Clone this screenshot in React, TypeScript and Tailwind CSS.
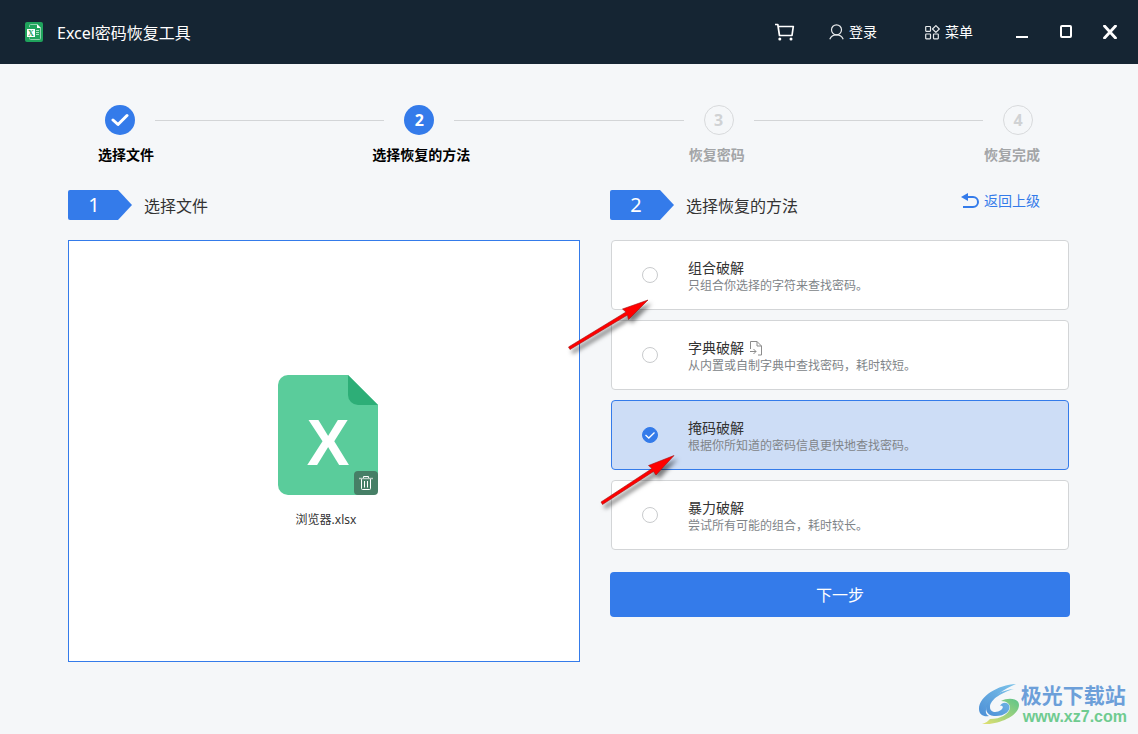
import { ReactNode, useState } from "react";
import clsx from "clsx";

const methods = [
  { id: "combo", title: "组合破解", text: "只组合你选择的字符来查找密码。" },
  {
    id: "dictionary",
    title: "字典破解",
    text: "从内置或自制字典中查找密码，耗时较短。",
    hasImport: true,
  },
  { id: "mask", title: "掩码破解", text: "根据你所知道的密码信息更快地查找密码。" },
  { id: "brute", title: "暴力破解", text: "尝试所有可能的组合，耗时较长。" },
];

const steps = ["选择文件", "选择恢复的方法", "恢复密码", "恢复完成"];
const currentStep = 2;

const AppLogo = () => (
  <svg width="18" height="20" viewBox="0 0 18 20" aria-hidden="true">
    <rect width="18" height="20" rx="2" fill="#1fa35c" />
    <path
      d="M4.500 5V3.500a1 1 0 0 1 1-1H12M15.500 6v10.500a1 1 0 0 1-1 1H5.500a1 1 0 0 1-1-1V15.500"
      fill="none"
      stroke="#8fd4ae"
    />
    <path d="M12 2V6h4z" fill="#fff" />
    <path d="M11 8.500h3M11 10.500h3M11 12.500h3" stroke="#a9dfc1" />
    <rect x="2" y="7" width="8" height="8" fill="#fff" />
    <text
      x="6"
      y="14"
      textAnchor="middle"
      fontSize="8"
      fontWeight="700"
      fill="#1fa35c"
      fontFamily="Liberation Serif, serif"
    >
      X
    </text>
  </svg>
);

const CartIcon = () => (
  <svg
    width="20"
    height="20"
    viewBox="0 0 20 20"
    fill="none"
    stroke="#fff"
    strokeWidth="1.700"
    aria-hidden="true"
  >
    <path d="M0 2.500h2.800L4.500 13.500H17L18.300 4.500H3.300" strokeLinejoin="round" />
    <circle cx="4.800" cy="17" r="1.500" fill="#fff" stroke="none" />
    <circle cx="16" cy="17" r="1.500" fill="#fff" stroke="none" />
  </svg>
);

const UserIcon = () => (
  <svg
    width="15"
    height="16"
    viewBox="0 0 15 16"
    fill="none"
    stroke="#e6e9eb"
    strokeWidth="1.200"
    aria-hidden="true"
  >
    <circle cx="7.500" cy="5.800" r="5" />
    <path d="M.8 15.200C1.800 12.500 4.300 10.900 7.500 10.900s5.700 1.600 6.700 4.300" />
  </svg>
);

const GridIcon = () => (
  <svg
    width="15"
    height="15"
    viewBox="0 0 15 15"
    fill="none"
    stroke="#e6e9eb"
    strokeWidth="1.200"
    aria-hidden="true"
  >
    <rect x=".7" y="1.500" width="4.800" height="4.800" rx=".5" />
    <rect x=".7" y="9" width="4.800" height="4.800" rx=".5" />
    <rect x="8.500" y="9" width="4.800" height="4.800" rx=".5" />
    <path d="M10.900.6l3.400 3.400-3.400 3.400L7.500 4z" strokeLinejoin="round" />
  </svg>
);

const FileIcon = () => (
  <svg width="100" height="120" viewBox="0 0 100 120" aria-hidden="true">
    <path
      d="M10 0H70L100 30V110a10 10 0 0 1-10 10H10A10 10 0 0 1 0 110V10A10 10 0 0 1 10 0z"
      fill="#5acc9b"
    />
    <path d="M70 0L100 30H80A10 10 0 0 1 70 20z" fill="#2dae77" />
    <text
      x="50"
      y="90"
      textAnchor="middle"
      fontSize="64"
      fontWeight="700"
      fill="#fff"
      fontFamily="Liberation Sans, sans-serif"
    >
      X
    </text>
  </svg>
);

const TrashIcon = () => (
  <svg
    width="14"
    height="16"
    viewBox="0 0 14 16"
    fill="none"
    stroke="#fff"
    aria-hidden="true"
  >
    <path d="M4.500 3V1.500h5V3M2.500 4v9.500a1 1 0 0 0 1 1h7a1 1 0 0 0 1-1V4M5.500 6v6.500M8.500 6v6.500" />
    <path d="M0 3.500h14" strokeWidth="1.500" stroke="#b9ccc3" />
  </svg>
);

const ImportIcon = () => (
  <svg
    width="13"
    height="15"
    viewBox="0 0 13 15"
    fill="none"
    stroke="#8c8c8c"
    aria-hidden="true"
  >
    <path d="M1.500 8V.5H8L12.500 5v9H9M8 .5V5h4.500M1 10.500h6M4.500 8L7 10.500 4.500 13" />
  </svg>
);

const BackIcon = () => (
  <svg width="18" height="18" viewBox="0 0 18 18" aria-hidden="true">
    <path d="M0 5L7 1V9z" fill="#347bea" />
    <path
      d="M6 5h6a5 5 0 0 1 0 10H2"
      fill="none"
      stroke="#347bea"
      strokeWidth="2"
    />
  </svg>
);

const Badge = ({ n, text }: { n: number; text: string }) => (
  <div className="flex items-center gap-3">
    <span className="flex h-[30px] w-16 items-center justify-center rounded-l-xs bg-[#347bea] pr-3 text-xl text-white [clip-path:polygon(0_0,50px_0,100%_50%,50px_100%,0_100%)]">
      {n}
    </span>
    <h2 className="pt-0.5 text-base text-[#333]">{text}</h2>
  </div>
);

const HeaderButton = ({
  icon,
  text,
}: {
  icon: ReactNode;
  text: string;
}) => (
  <button type="button" className="flex items-center gap-[5px] text-sm">
    {icon}
    {text}
  </button>
);

const Header = () => (
  <header className="flex h-16 items-center bg-[#152533] pr-[21px] pl-[25px] text-white">
    <AppLogo />
    <h1 className="ml-[14px] pt-0.5 text-base">Excel密码恢复工具</h1>
    <div className="ml-auto flex items-center">
      <button type="button" aria-label="购物车">
        <CartIcon />
      </button>
      <div className="ml-[34px] flex gap-12">
        <HeaderButton icon={<UserIcon />} text="登录" />
        <HeaderButton icon={<GridIcon />} text="菜单" />
      </div>
      <div className="ml-[42px] flex gap-[30px]">
        <button type="button" aria-label="最小化">
          <svg width="14" height="14" viewBox="0 0 14 14">
            <path d="M1 12h12" stroke="#fff" strokeWidth="2" />
          </svg>
        </button>
        <button type="button" aria-label="最大化">
          <svg width="14" height="14" viewBox="0 0 14 14">
            <rect
              x="2"
              y="1"
              width="10"
              height="11"
              rx="1"
              fill="none"
              stroke="#fff"
              strokeWidth="2"
            />
          </svg>
        </button>
        <button type="button" aria-label="关闭">
          <svg width="14" height="14" viewBox="0 0 14 14">
            <path
              d="M1.500 1L12.500 13M12.500 1L1.500 13"
              stroke="#fff"
              strokeWidth="2.800"
              strokeLinecap="round"
            />
          </svg>
        </button>
      </div>
    </div>
  </header>
);

const Stepper = () => (
  <section>
    <div className="flex items-center gap-5 px-[105px] pt-[41px]">
      {steps.map((step, i) => (
        <div key={step} className={clsx("flex items-center gap-5", i > 0 && "flex-1")}>
          {i > 0 && <div className="h-px flex-1 bg-[#d3d5d7]"></div>}
          <span
            className={clsx(
              "flex size-[30px] items-center justify-center rounded-full text-base font-bold",
              i < currentStep
                ? "bg-[#347bea] text-white"
                : "border border-[#d8dadc] text-[#d0d2d4]"
            )}
          >
            {i + 1 < currentStep ? (
              <svg width="18" height="14" viewBox="0 0 18 14" aria-hidden="true">
                <path
                  d="M2 7l5 4.500L16 2.500"
                  fill="none"
                  stroke="#fff"
                  strokeWidth="3"
                  strokeLinecap="round"
                  strokeLinejoin="round"
                />
              </svg>
            ) : (
              i + 1
            )}
          </span>
        </div>
      ))}
    </div>
    <ol className="mt-[10px] flex justify-between px-[76px] text-sm font-bold">
      {steps.map((step, i) => (
        <li
          key={step}
          className={clsx(
            "w-[100px] text-center whitespace-nowrap",
            i < currentStep ? "text-black" : "text-[#a3a5a7]"
          )}
        >
          {step}
        </li>
      ))}
    </ol>
  </section>
);

const App = () => {
  const [method, setMethod] = useState("mask");

  return (
    <div className="relative min-h-screen bg-[#f5f7f9] pb-[72px] font-['Noto_Sans','Noto_Sans_CJK_SC',sans-serif]">
      <Header />
      <Stepper />

      <main className="mt-[25px] grid grid-cols-[512fr_460fr] gap-[30px] px-[68px]">
        {/* FILE */}
        <section>
          <Badge n={1} text="选择文件" />
          <div className="mt-5 flex h-[422px] flex-col items-center border border-[#347bea] bg-white pt-[134px]">
            <div className="relative ml-2">
              <FileIcon />
              <button
                type="button"
                aria-label="删除文件"
                className="absolute right-0 bottom-0 flex size-6 items-center justify-center rounded-sm bg-[#467f66]"
              >
                <TrashIcon />
              </button>
            </div>
            <p className="mt-[17px] ml-1 text-xs text-[#333]">浏览器.xlsx</p>
          </div>
        </section>

        {/* METHOD */}
        <section>
          <div className="flex justify-between">
            <Badge n={2} text="选择恢复的方法" />
            <a
              href="#"
              className="mr-[30px] flex h-[22px] items-center gap-[5px] text-sm text-[#347bea]"
            >
              <BackIcon />
              返回上级
            </a>
          </div>

          <div className="relative mx-px mt-5 flex flex-col gap-[10px]">
            {methods.map((item) => (
              <label
                key={item.id}
                className="flex h-[70px] items-center gap-[30px] rounded-sm border border-[#d3d5d7] bg-white pl-[30px] has-checked:border-[#347bea] has-checked:bg-[#cdddf6]"
              >
                <span className="relative size-4">
                  <input
                    type="radio"
                    name="method"
                    checked={method === item.id}
                    onChange={() => setMethod(item.id)}
                    className="block size-4 appearance-none rounded-full border border-[#c9cbcd] bg-white checked:border-[#347bea] checked:bg-[#347bea]"
                  />
                  {method === item.id && (
                    <svg
                      viewBox="0 0 16 16"
                      className="pointer-events-none absolute inset-0"
                      aria-hidden="true"
                    >
                      <path
                        d="M3.500 8l3.300 3 5.700-5.500"
                        fill="none"
                        stroke="#fff"
                        strokeWidth="1.300"
                      />
                    </svg>
                  )}
                </span>
                <span className="pt-1">
                  <span className="flex h-[18px] items-center gap-[5px] text-sm text-[#333]">
                    {item.title}
                    {item.hasImport && <ImportIcon />}
                  </span>
                  <span className="block text-xs leading-[18px] text-[#808488]">
                    {item.text}
                  </span>
                </span>
              </label>
            ))}

            {/* pointers over the list */}
            <svg
              width="100"
              height="72"
              viewBox="0 0 100 72"
              className="pointer-events-none absolute top-[50px] -left-[49px] drop-shadow-[3px_4px_2px_rgba(0,0,0,0.5)]"
              aria-hidden="true"
            >
              <path
                d="M86 10L60.500 19 64 22 6.500 57 8 59.500 65.500 25 66.500 29.500z"
                fill="#f00"
                stroke="#a01010"
                strokeWidth=".6"
              />
            </svg>
            <svg
              width="100"
              height="72"
              viewBox="0 0 100 72"
              className="pointer-events-none absolute top-[207px] -left-[16px] drop-shadow-[3px_4px_2px_rgba(0,0,0,0.5)]"
              aria-hidden="true"
            >
              <path
                d="M79 8.500L53.500 18.500 57 21.500 6 55 7.500 57.500 58.500 24.500 61 28z"
                fill="#f00"
                stroke="#a01010"
                strokeWidth=".6"
              />
            </svg>
          </div>

          <button
            type="button"
            className="mt-[22px] h-[45px] w-full rounded-sm bg-[#347bea] text-base text-white"
          >
            下一步
          </button>
        </section>
      </main>

      {/* SITE MARK */}
      <div className="absolute right-[11px] bottom-[7px] flex items-center">
        <svg width="43" height="42" viewBox="0 0 43 42" aria-hidden="true">
          <defs>
            <linearGradient id="swirl" x1="0" y1="1" x2="1" y2="0">
              <stop offset="0" stopColor="#4d8fd6" />
              <stop offset="1" stopColor="#7cc4ea" />
            </linearGradient>
            <linearGradient id="leaf" x1="0" y1="1" x2="1" y2="0">
              <stop offset="0" stopColor="#e3e070" />
              <stop offset="1" stopColor="#5cc48a" />
            </linearGradient>
          </defs>
          <path
            d="M38 0C20 1 1 12 1 25c0 6 5 8 10 7-4-2-4-6-1-11C14 13 26 5 38 0z"
            fill="url(#swirl)"
          />
          <path
            d="M36 5C25 8 12 15 12 23c0 6 7 6 11 3 3-2 2-5-1-4 2-4 7-4 9-1 3 6-6 12-15 11-8-1-9-7-7-12C13 12 24 6 36 5z"
            fill="url(#swirl)"
          />
          <path
            d="M23 17c7-4 18-3 18 4C41 32 20 41 4 40c4-1 6-3 8-5 11 0 19-5 20-11 0-4-3-7-9-7z"
            fill="url(#leaf)"
          />
        </svg>
        <div className="flex flex-col">
          <span className="text-[21px] leading-6 font-bold text-[#6c9fd9]">
            极光下载站
          </span>
          <span className="pl-0.5 font-['Liberation_Sans',sans-serif] text-base leading-5 font-bold text-[#6fcb90]">
            www.xz7.com
          </span>
        </div>
      </div>
    </div>
  );
};

export default App;
